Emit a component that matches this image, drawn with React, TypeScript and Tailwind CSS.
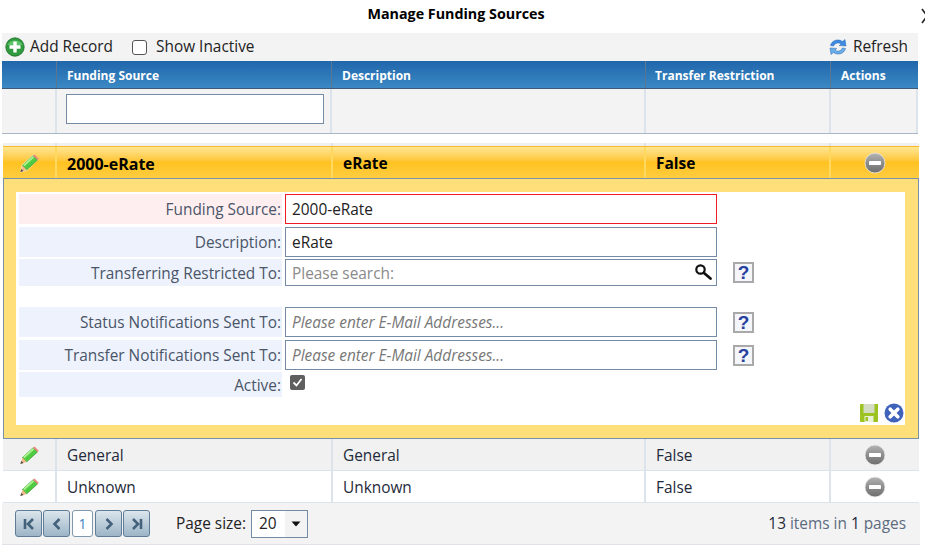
import React from 'react';

const PencilIcon = () => (
  <svg width="22" height="20" viewBox="0 0 22 20">
    <path d="M3.5 12 L15 1.5 L20.5 6.5 L9 18 L2 19.5 Z" fill="#fff" opacity="0.55" />
    <path d="M4.5 12.5 L15 2.8 L19.5 7 L8.5 17 Z" fill="#4fcb41" stroke="#379a30" strokeWidth="0.7" />
    <path d="M5.8 12.6 L15.6 3.8" stroke="#a9f08f" strokeWidth="2" />
    <path d="M15 2.8 L16.5 1.5 L20.7 5.7 L19.5 7 Z" fill="#e8837d" />
    <path d="M4.5 12.5 L8.5 17 L2.4 19 Z" fill="#efb98a" />
    <path d="M2.4 19 L3.2 15.9 L5.6 18 Z" fill="#4d4d4d" />
  </svg>
);

const MinusIcon = () => (
  <svg width="22" height="22" viewBox="0 0 22 22">
    <defs>
      <linearGradient id="minusFill" x1="0" y1="0" x2="0" y2="1">
        <stop offset="0" stopColor="#b5b5b5" />
        <stop offset="0.5" stopColor="#8d8d8d" />
        <stop offset="1" stopColor="#6e6e6e" />
      </linearGradient>
    </defs>
    <circle cx="11" cy="11" r="10" fill="url(#minusFill)" stroke="#e8e8e8" strokeWidth="0.8" />
    <rect x="5" y="9" width="12" height="4" rx="0.8" fill="#fff" />
  </svg>
);

const AddIcon = () => (
  <svg width="20" height="20" viewBox="0 0 20 20">
    <circle cx="10" cy="10" r="9.2" fill="#2f9a3e" stroke="#1f6e2b" strokeWidth="0.8" />
    <path d="M2.5 8 A8 7 0 0 1 17.5 8 Z" fill="#5dc36a" />
    <path d="M10 4.5 V15.5 M4.5 10 H15.5" stroke="#fff" strokeWidth="3.4" />
  </svg>
);

const RefreshIcon = () => (
  <svg width="20" height="20" viewBox="0 0 20 20">
    <path d="M2.5 8.5 C3.5 3.5 10 1.2 14.5 4.5 L17 2.5 L18 9 L11.2 8.6 L13.2 6.8 C10 5 7 6 5.6 9 Z" fill="#3d8ae0" stroke="#2a68b5" strokeWidth="0.5" />
    <path d="M17.5 11.5 C16.5 16.5 10 18.8 5.5 15.5 L3 17.5 L2 11 L8.8 11.4 L6.8 13.2 C10 15 13 14 14.4 11 Z" fill="#6aaee8" stroke="#2a68b5" strokeWidth="0.5" />
  </svg>
);

const SearchIcon = () => (
  <svg width="20" height="20" viewBox="0 0 20 20">
    <circle cx="7.5" cy="7.5" r="4.2" fill="none" stroke="#111" strokeWidth="2.2" />
    <path d="M11 11 L17.5 16.5" stroke="#111" strokeWidth="2.8" strokeLinecap="round" />
  </svg>
);

const HelpIcon = () => (
  <div className="flex h-[21px] w-[21px] items-center justify-center border-2 border-[#a9a9a9] bg-[#f4f6fb] font-['Liberation_Sans',sans-serif] text-[19px] leading-none font-bold text-[#27409f]">
    ?
  </div>
);

const SaveIcon = () => (
  <svg width="20" height="20" viewBox="0 0 20 20">
    <path d="M1 2 Q1 1 2 1 H19 V18 Q19 19 18 19 H2 Q1 19 1 18 Z" fill="#9cc321" />
    <rect x="4.5" y="1" width="11" height="9" fill="#d4dcc4" />
    <rect x="5.5" y="13" width="9" height="6" fill="#e8f0d8" />
    <rect x="6.5" y="14" width="2.5" height="4" fill="#9cc321" />
  </svg>
);

const CancelIcon = () => (
  <svg width="20" height="20" viewBox="0 0 20 20">
    <circle cx="10" cy="10" r="9.5" fill="#3f63bb" />
    <path d="M6.2 6.2 L13.8 13.8 M13.8 6.2 L6.2 13.8" stroke="#fff" strokeWidth="3.6" strokeLinecap="round" />
  </svg>
);

const PagerButton = ({ d }: { d: string }) => (
  <button className="flex h-[27px] w-[27px] items-center justify-center rounded-[3px] border border-[#5f7d97] bg-gradient-to-b from-[#dbe5ec] to-[#9db5c7]">
    <svg width="14" height="14" viewBox="0 0 14 14">
      <path d={d} fill="none" stroke="#44627c" strokeWidth="2.6" />
    </svg>
  </button>
);

const FormRow = ({
  label,
  tint = 'bg-[#edf2fd]',
  height,
  children,
  help
}: {
  label: string;
  tint?: string;
  height: string;
  children: React.ReactNode;
  help?: boolean;
}) => (
  <div className={`flex ${height}`}>
    <div className={`flex w-[263px] items-center justify-end pt-[2px] pr-px text-[15.4px] text-[#4a5568] ${tint}`}>{label}</div>
    <div className="ml-[3px] w-[432px]">{children}</div>
    {help && (
      <div className="ml-4 flex items-center">
        <HelpIcon />
      </div>
    )}
  </div>
);

const inputBox = 'flex h-full w-full items-center border border-[#748aa5] bg-white px-[6px] pt-[2px] text-[15.4px]';

const DataRow = ({ name, tint }: { name: string; tint: string }) => (
  <div className={`grid h-[32px] grid-cols-[54px_276px_313px_185px_88px] border-b border-[#dde3ea] text-[15.4px] text-[#1f2a3a] ${tint}`}>
    <div className="flex items-center justify-center border-r-2 border-[#dde3ea]">
      <PencilIcon />
    </div>
    <div className="flex items-center border-r-2 border-[#dde3ea] pt-[3px] pl-[10px]">{name}</div>
    <div className="flex items-center border-r-2 border-[#dde3ea] pt-[3px] pl-[10px]">{name}</div>
    <div className="flex items-center border-r-2 border-[#dde3ea] pt-[3px] pl-[10px]">False</div>
    <div className="flex items-center justify-center">
      <MinusIcon />
    </div>
  </div>
);

export default function App() {
  return (
    <div className="relative h-[551px] w-[925px] overflow-hidden bg-white font-['Open_Sans','Noto_Sans',sans-serif] text-[#222]">
      {/* Title */}
      <div className="flex h-[33px] items-center justify-center pr-[13px] pb-[6px] text-[14.3px] font-bold text-black">
        Manage Funding Sources
      </div>
      <svg className="absolute top-[8px] left-[921px]" width="12" height="16" viewBox="0 0 12 16">
        <path d="M1 1 L11 15 M11 1 L1 15" stroke="#222" strokeWidth="1.6" />
      </svg>

      <div className="ml-[2px] w-[916px]">
        {/* Toolbar */}
        <div className="flex h-[28px] items-center bg-[#f3f3f3] pr-[10px] text-[15.4px]">
          <span className="ml-[3px] flex items-center">
            <AddIcon />
          </span>
          <span className="ml-[5px]">Add Record</span>
          <span className="ml-[19px] h-[15px] w-[15px] rounded-[3px] border border-[#555] bg-white" />
          <span className="ml-[9px]">Show Inactive</span>
          <span className="ml-auto flex items-center">
            <RefreshIcon />
          </span>
          <span className="ml-[5px]">Refresh</span>
        </div>

        {/* Header */}
        <div className="grid h-[28px] grid-cols-[55px_275px_314px_185px_87px] border-b border-[#3e5a78] bg-gradient-to-b from-[#2066ab] to-[#3b89c4] pt-[3px] text-[12px] font-bold text-white">
          <div className="-mt-[3px] border-r border-[#5b7690]" />
          <div className="-mt-[3px] flex items-center border-r border-[#5b7690] pt-[3px] pl-[10px]">Funding Source</div>
          <div className="-mt-[3px] flex items-center border-r border-[#5b7690] pt-[3px] pl-[10px]">Description</div>
          <div className="-mt-[3px] flex items-center border-r border-[#5b7690] pt-[3px] pl-[9px]">Transfer Restriction</div>
          <div className="-mt-[3px] flex items-center pt-[3px] pl-[10px]">Actions</div>
        </div>

        {/* Filter row */}
        <div className="grid h-[45px] grid-cols-[55px_275px_314px_185px_87px] border-b border-[#a9b6c4] bg-[#f3f3f3]">
          <div className="border-r-2 border-[#dde3ea]" />
          <div className="border-r-2 border-[#dde3ea] pt-[5px] pl-[9px]">
            <input className="h-[30px] w-[258px] border border-[#748aa5] bg-white" />
          </div>
          <div className="border-r-2 border-[#dde3ea]" />
          <div className="border-r-2 border-[#dde3ea]" />
          <div className="border-r-2 border-[#dde3ea]" />
        </div>
        <div className="h-[9px] bg-white" />
      </div>

      <div className="ml-[3px] w-[916px]">
        <div className="grid h-[3px] grid-cols-[54px_276px_313px_185px_88px] bg-[#f0f0f0]">
          <div className="border-r-2 border-[#dde3ea]" />
          <div className="border-r-2 border-[#dde3ea]" />
          <div className="border-r-2 border-[#dde3ea]" />
          <div className="border-r-2 border-[#dde3ea]" />
        </div>

        {/* Selected row */}
        <div className="grid h-[32px] grid-cols-[54px_276px_313px_185px_88px] border-t border-[#f7b92a] bg-gradient-to-b from-[#ffe68f] via-[#ffc21f] to-[#ffcd3f] text-[15.5px] font-bold text-black">
          <div className="flex items-center justify-center border-r-2 border-[#ffd85f]">
            <PencilIcon />
          </div>
          <div className="flex items-center border-r-2 border-[#ffd85f] pt-[2px] pl-[10px] text-[16px]">2000-eRate</div>
          <div className="flex items-center border-r-2 border-[#ffd85f] pt-[2px] pl-[10px]">eRate</div>
          <div className="flex items-center border-r-2 border-[#ffd85f] pt-[2px] pl-[10px]">False</div>
          <div className="flex items-center justify-center">
            <MinusIcon />
          </div>
        </div>

        {/* Edit form */}
        <div className="h-[261px] border border-[#7a8fa8] bg-[#ffdf7a] py-[13px] pr-[13px] pl-[12px]">
          <div className="flex h-[233px] flex-col bg-white pt-[2px] pl-[3px]">
            <FormRow label="Funding Source:" tint="bg-[#ffeef0]" height="h-[30px]">
              <div className={`${inputBox} border-[#f01c24] text-[#222]`}>2000-eRate</div>
            </FormRow>
            <div className="h-[3px]" />
            <FormRow label="Description:" height="h-[30px]">
              <div className={`${inputBox} text-[#222]`}>eRate</div>
            </FormRow>
            <div className="h-[2px]" />
            <FormRow label="Transferring Restricted To:" height="h-[27px]" help>
              <div className={`${inputBox} justify-between pr-[3px] text-[#8a8a8a]`}>
                <span>Please search:</span>
                <span className="-mt-[3px] -ml-[6px] flex">
                  <SearchIcon />
                </span>
              </div>
            </FormRow>
            <div className="h-[21px]" />
            <FormRow label="Status Notifications Sent To:" height="h-[30px]" help>
              <div className={`${inputBox} text-[#777] italic`}>Please enter E-Mail Addresses...</div>
            </FormRow>
            <div className="h-[3px]" />
            <FormRow label="Transfer Notifications Sent To:" height="h-[30px]" help>
              <div className={`${inputBox} text-[#777] italic`}>Please enter E-Mail Addresses...</div>
            </FormRow>
            <div className="h-[2px]" />
            <FormRow label="Active:" height="h-[25px]">
              <div className="flex h-full items-center pb-[4px] pl-[5px]">
                <span className="flex h-[15px] w-[15px] items-center justify-center rounded-[2px] bg-[#5f5f5f]">
                  <svg width="11" height="11" viewBox="0 0 11 11">
                    <path d="M1.5 5.5 L4.5 8.5 L9.5 2" fill="none" stroke="#fff" strokeWidth="1.8" />
                  </svg>
                </span>
              </div>
            </FormRow>
            <div className="mt-auto flex justify-end gap-[5px] pr-[1px] pb-[2px]">
              <SaveIcon />
              <CancelIcon />
            </div>
          </div>
        </div>

        <DataRow name="General" tint="bg-[#f1f1f1]" />
        <DataRow name="Unknown" tint="bg-white" />
      </div>

      {/* Pager */}
      <div className="ml-[2px] flex h-[42px] w-[918px] items-center border-b border-[#dfe3e8] bg-[#f3f3f3] pr-[14px] pl-[13px] text-[15.4px]">
        <PagerButton d="M3 2 V12 M11 2 L6 7 L11 12" />
        <div className="ml-[1px]">
          <PagerButton d="M9.5 2 L4.5 7 L9.5 12" />
        </div>
        <div className="ml-[2px] flex h-[27px] w-[21px] items-center justify-center rounded-[3px] border border-[#7f98ad] bg-white text-[14px] text-[#3b82c4]">
          1
        </div>
        <div className="ml-[2px]">
          <PagerButton d="M4.5 2 L9.5 7 L4.5 12" />
        </div>
        <div className="ml-[1px]">
          <PagerButton d="M3 2 L8 7 L3 12 M11 2 V12" />
        </div>
        <span className="ml-[26px] text-[#222]">Page size:</span>
        <div className="ml-[5px] flex h-[28px] w-[57px] items-center border border-[#748aa5]">
          <span className="flex h-full w-[33px] items-center bg-white pl-[7px]">20</span>
          <span className="flex flex-1 items-center justify-center">
            <svg width="10" height="6" viewBox="0 0 10 6">
              <path d="M0.5 0.5 H9.5 L5 5.5 Z" fill="#111" />
            </svg>
          </span>
        </div>
        <span className="ml-auto text-[#5c6b80]">
          <span className="text-[#1f2a3a]">13</span> items in <span className="text-[#1f2a3a]">1</span> pages
        </span>
      </div>
    </div>
  );
}
